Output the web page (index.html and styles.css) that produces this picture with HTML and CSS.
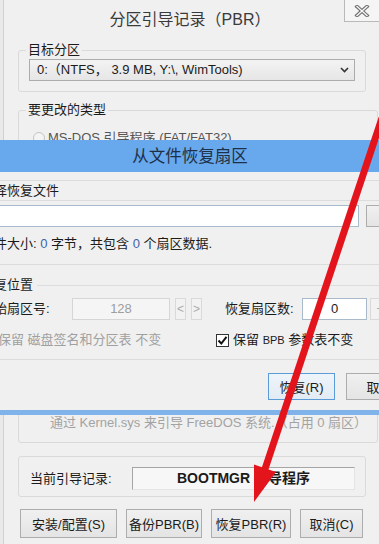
FILE: index.html
```html
<!DOCTYPE html>
<html lang="zh-CN">
<head>
<meta charset="UTF-8" />
<meta name="viewport" content="width=device-width, initial-scale=1.0" />
<title>分区引导记录（PBR）</title>
<link rel="stylesheet" href="styles.css">
</head>
<body>
<div class="dlg">
  <div class="dlg-title">分区引导记录（PBR）</div>
  <button class="close-btn" title="关闭">
    <svg width="16" height="12" viewBox="0 0 16 12"><path d="M3 1.5L13 10.5M13 1.5L3 10.5" stroke="#6f6f6f" stroke-width="3.6" stroke-linecap="square"/><path d="M3 1.5L13 10.5M13 1.5L3 10.5" stroke="#f6f6f6" stroke-width="1.4" stroke-linecap="square"/></svg>
  </button>

  <fieldset class="grp">
    <legend>目标分区</legend>
    <div class="combo">
      <span>0:（NTFS， 3.9 MB, Y:\, WimTools)</span>
      <svg class="chev" width="9" height="6" viewBox="0 0 9 6"><path d="M1 1l3.5 3.5L8 1" fill="none" stroke="#333" stroke-width="1.6"/></svg>
    </div>
  </fieldset>

  <fieldset class="grp grp-type">
    <legend>要更改的类型</legend>
    <div class="opts">
      <label class="radio off"><span class="dot"></span>MS-DOS 引导程序 (FAT/FAT32)</label>
      <label class="radio"><span class="dot"></span>Windows NT/2000/XP 引导程序 (NTLDR)</label>
      <label class="radio"><span class="dot on"></span>Windows Vista/7/8 引导程序 (BOOTMGR)</label>
      <label class="radio"><span class="dot"></span>GRUB4DOS 引导程序</label>
      <label class="radio"><span class="dot"></span>FreeDOS 引导程序 (FAT/FAT32)</label>
      <div class="opt-desc">通过 Kernel.sys 来引导 FreeDOS 系统.（占用 0 扇区）</div>
    </div>
  </fieldset>

  <fieldset class="grp grp-cur">
    <span>当前引导记录:</span>
    <div class="cur-field">BOOTMGR 引导程序</div>
  </fieldset>

  <div class="btn-row">
    <button class="btn b1">安装/配置(S)</button>
    <button class="btn b2">备份PBR(B)</button>
    <button class="btn b3">恢复PBR(R)</button>
    <button class="btn b4">取消(C)</button>
  </div>
</div>

<div class="sub">
  <div class="sub-title">从文件恢复扇区</div>
  <div class="sub-body">
    <div class="sec-head">选择恢复文件</div>
    <div class="file-row">
      <div class="field"></div>
      <button class="btn dots">...</button>
    </div>
    <div class="info">文件大小: <span class="num">0</span> 字节，共包含 <span class="num">0</span> 个扇区数据.</div>
    <div class="sep"></div>
    <div class="sec-line">恢复位置</div>
    <div class="pos-row">
      <span class="pos-label">起始扇区号:</span>
      <div class="field off start">128</div>
      <span class="spin">&lt;</span>
      <span class="spin">&gt;</span>
      <span class="pos-label2">恢复扇区数:</span>
      <div class="field count">0</div>
      <span class="spin wide">+</span>
    </div>
    <div class="keep-row">
      <div class="keep1"><span class="box off"></span><span class="muted">保留 磁盘签名和分区表 不变</span></div>
      <span class="box">
        <svg width="11" height="11" viewBox="0 0 11 11"><path d="M1.5 5.5l2.8 3L9.5 1.8" fill="none" stroke="#111" stroke-width="2"/></svg>
      </span>
      <span class="keep2">保留 <span class="sm">BPB</span> 参数表不变</span>
    </div>
    <div class="sep end"></div>
    <div class="sub-btns">
      <button class="btn def">恢复(R)</button>
      <button class="btn">取消</button>
    </div>
  </div>
</div>

<svg class="arrow" width="379" height="544" viewBox="0 0 379 544">
  <line x1="382" y1="118" x2="265" y2="469" stroke="#e3141b" stroke-width="7"/>
  <polygon points="254,502 276,472 254,464.5" fill="#e3141b"/>
</svg>
</body>
</html>
```

FILE: styles.css
```css
* { box-sizing: border-box; margin: 0; padding: 0; }
body { font-family: "Liberation Sans", "Noto Sans CJK SC", sans-serif; font-size: 13px; line-height: 16px; color: #1b1b1b; background: #e9e9e9; width: 379px; height: 544px; overflow: hidden; position: relative; }
button { font-family: inherit; font-size: 13px; color: #1b1b1b; cursor: default; }

.dlg { margin-left: 3px; border-left: 1px solid #d0d0d0; background: #f0f0f0; height: 544px; padding: 0 13px 0 14px; position: relative; }
.dlg-title { height: 42px; line-height: 40px; font-size: 16px; text-align: center; color: #3a3a3a; padding-right: 4px; }
.close-btn { position: absolute; top: 0; right: -1px; width: 36px; height: 22px; border: 1px solid #b9b9b9; border-top: none; background: #f5f5f5; display: flex; align-items: center; justify-content: center; }

.grp { border: 1px solid #dadada; border-radius: 3px; padding: 1px 10px 10px 10px; }
.grp legend { padding: 0 2px; margin-left: -3px; line-height: 16px; color: #1b1b1b; }
.combo { height: 22px; border: 1px solid #acacac; background: linear-gradient(#f3f3f3, #e6e6e6); padding: 0 5px 0 7px; display: flex; align-items: center; justify-content: space-between; }
.grp-type { margin-top: 10px; height: 341px; padding-top: 10px; }
.opts { height: 304px; display: flex; flex-direction: column; }
.radio { display: flex; align-items: center; height: 20px; margin-bottom: 4px; color: #555; white-space: nowrap; }
.radio .dot { width: 12px; height: 12px; border: 1px solid #c4c4c4; border-radius: 50%; background: #f4f4f4; margin: 0 3px 0 4px; }
.radio .dot.on { background: radial-gradient(circle, #333 30%, #fff 36%); border-color: #333; }
.opt-desc { margin-top: auto; padding-left: 21px; line-height: 18px; color: #a3a3a3; white-space: nowrap; }

.grp-cur { margin-top: 13px; padding: 10px 10px 6px 11px; display: flex; align-items: center; }
.cur-field { margin-left: auto; width: 223px; height: 23px; line-height: 21px; text-align: center; font-size: 14px; font-weight: 700; background: #f7f7f7; border: 1px solid; border-color: #a5a5a5 #e4e4e4 #e4e4e4 #a5a5a5; }

.btn-row { margin: 12px 0 0 2px; width: 343px; display: flex; justify-content: space-between; }
.btn { height: 29px; border: 1px solid #adadad; background: linear-gradient(#f0f0f0, #e4e4e4); white-space: nowrap; }
.b1 { width: 97px; }
.b2 { width: 76px; }
.b3 { width: 80px; }
.b4 { width: 63px; }

.sub { position: absolute; top: 140px; left: -43px; width: 466px; height: 275px; background: #f0f0f0; border-bottom: 5px solid #7fb3ea; }
.sub-title { height: 32px; line-height: 32px; background: #68a8ec; text-align: center; font-size: 16.5px; color: #1e3048; }
.sub-body { padding: 0 10px 0 24px; white-space: nowrap; }
.sec-head { margin-top: 8px; height: 21px; line-height: 19px; border-top: 1px solid #dcdcdc; border-bottom: 1px solid #dcdcdc; }
.file-row { margin-top: 4px; height: 22px; display: flex; gap: 7px; }
.field { flex: 1; background: #fff; border: 1px solid #a9bacb; }
.dots { width: 47px; height: 22px; line-height: 12px; }
.info { margin-top: 9px; }
.num { color: #3d64a8; }
.sep { margin-top: 12px; border-top: 1px solid #dcdcdc; }
.sec-line { margin-top: 12px; display: flex; align-items: center; gap: 4px; }
.sec-line::after { content: ""; flex: 1; border-top: 1px solid #dcdcdc; }
.pos-row { margin-top: 5px; height: 22px; display: flex; align-items: center; }
.pos-label { width: 91px; }
.field.off { flex: none; background: #f5f5f5; border-color: #d6d6d6; color: #9d9d9d; }
.field.start, .field.count { height: 22px; line-height: 20px; text-align: center; }
.field.start { width: 98px; }
.field.count { flex: none; width: 65px; margin-left: 4px; }
.spin { width: 11px; height: 22px; margin-left: 5px; border: 1px solid #d9d9d9; background: #f2f2f2; color: #aaa; text-align: center; line-height: 20px; font-size: 12px; }
.spin.wide { width: 20px; margin-left: 3px; }
.pos-label2 { margin-left: 23px; width: 73px; }
.keep-row { margin-top: 12px; display: flex; align-items: center; }
.keep1 { width: 235px; display: flex; align-items: center; gap: 4px; }
.box { width: 13px; height: 13px; border: 1px solid #333; background: #fff; display: flex; align-items: center; justify-content: center; }
.box.off { border-color: #c2c2c2; background: #f4f4f4; }
.muted { color: #a0a0a0; }
.keep2 { margin-left: 4px; }
.sm { font-size: 11px; }
.sep.end { margin-top: 11px; }
.sub-btns { margin-top: 13px; display: flex; justify-content: flex-end; gap: 11px; }
.sub-btns .btn { width: 67px; height: 27px; }
.btn.def { border-color: #5b9bd8; background: linear-gradient(#eef4fa, #e2ebf4); }

.arrow { position: absolute; top: 0; left: 0; pointer-events: none; }
```
